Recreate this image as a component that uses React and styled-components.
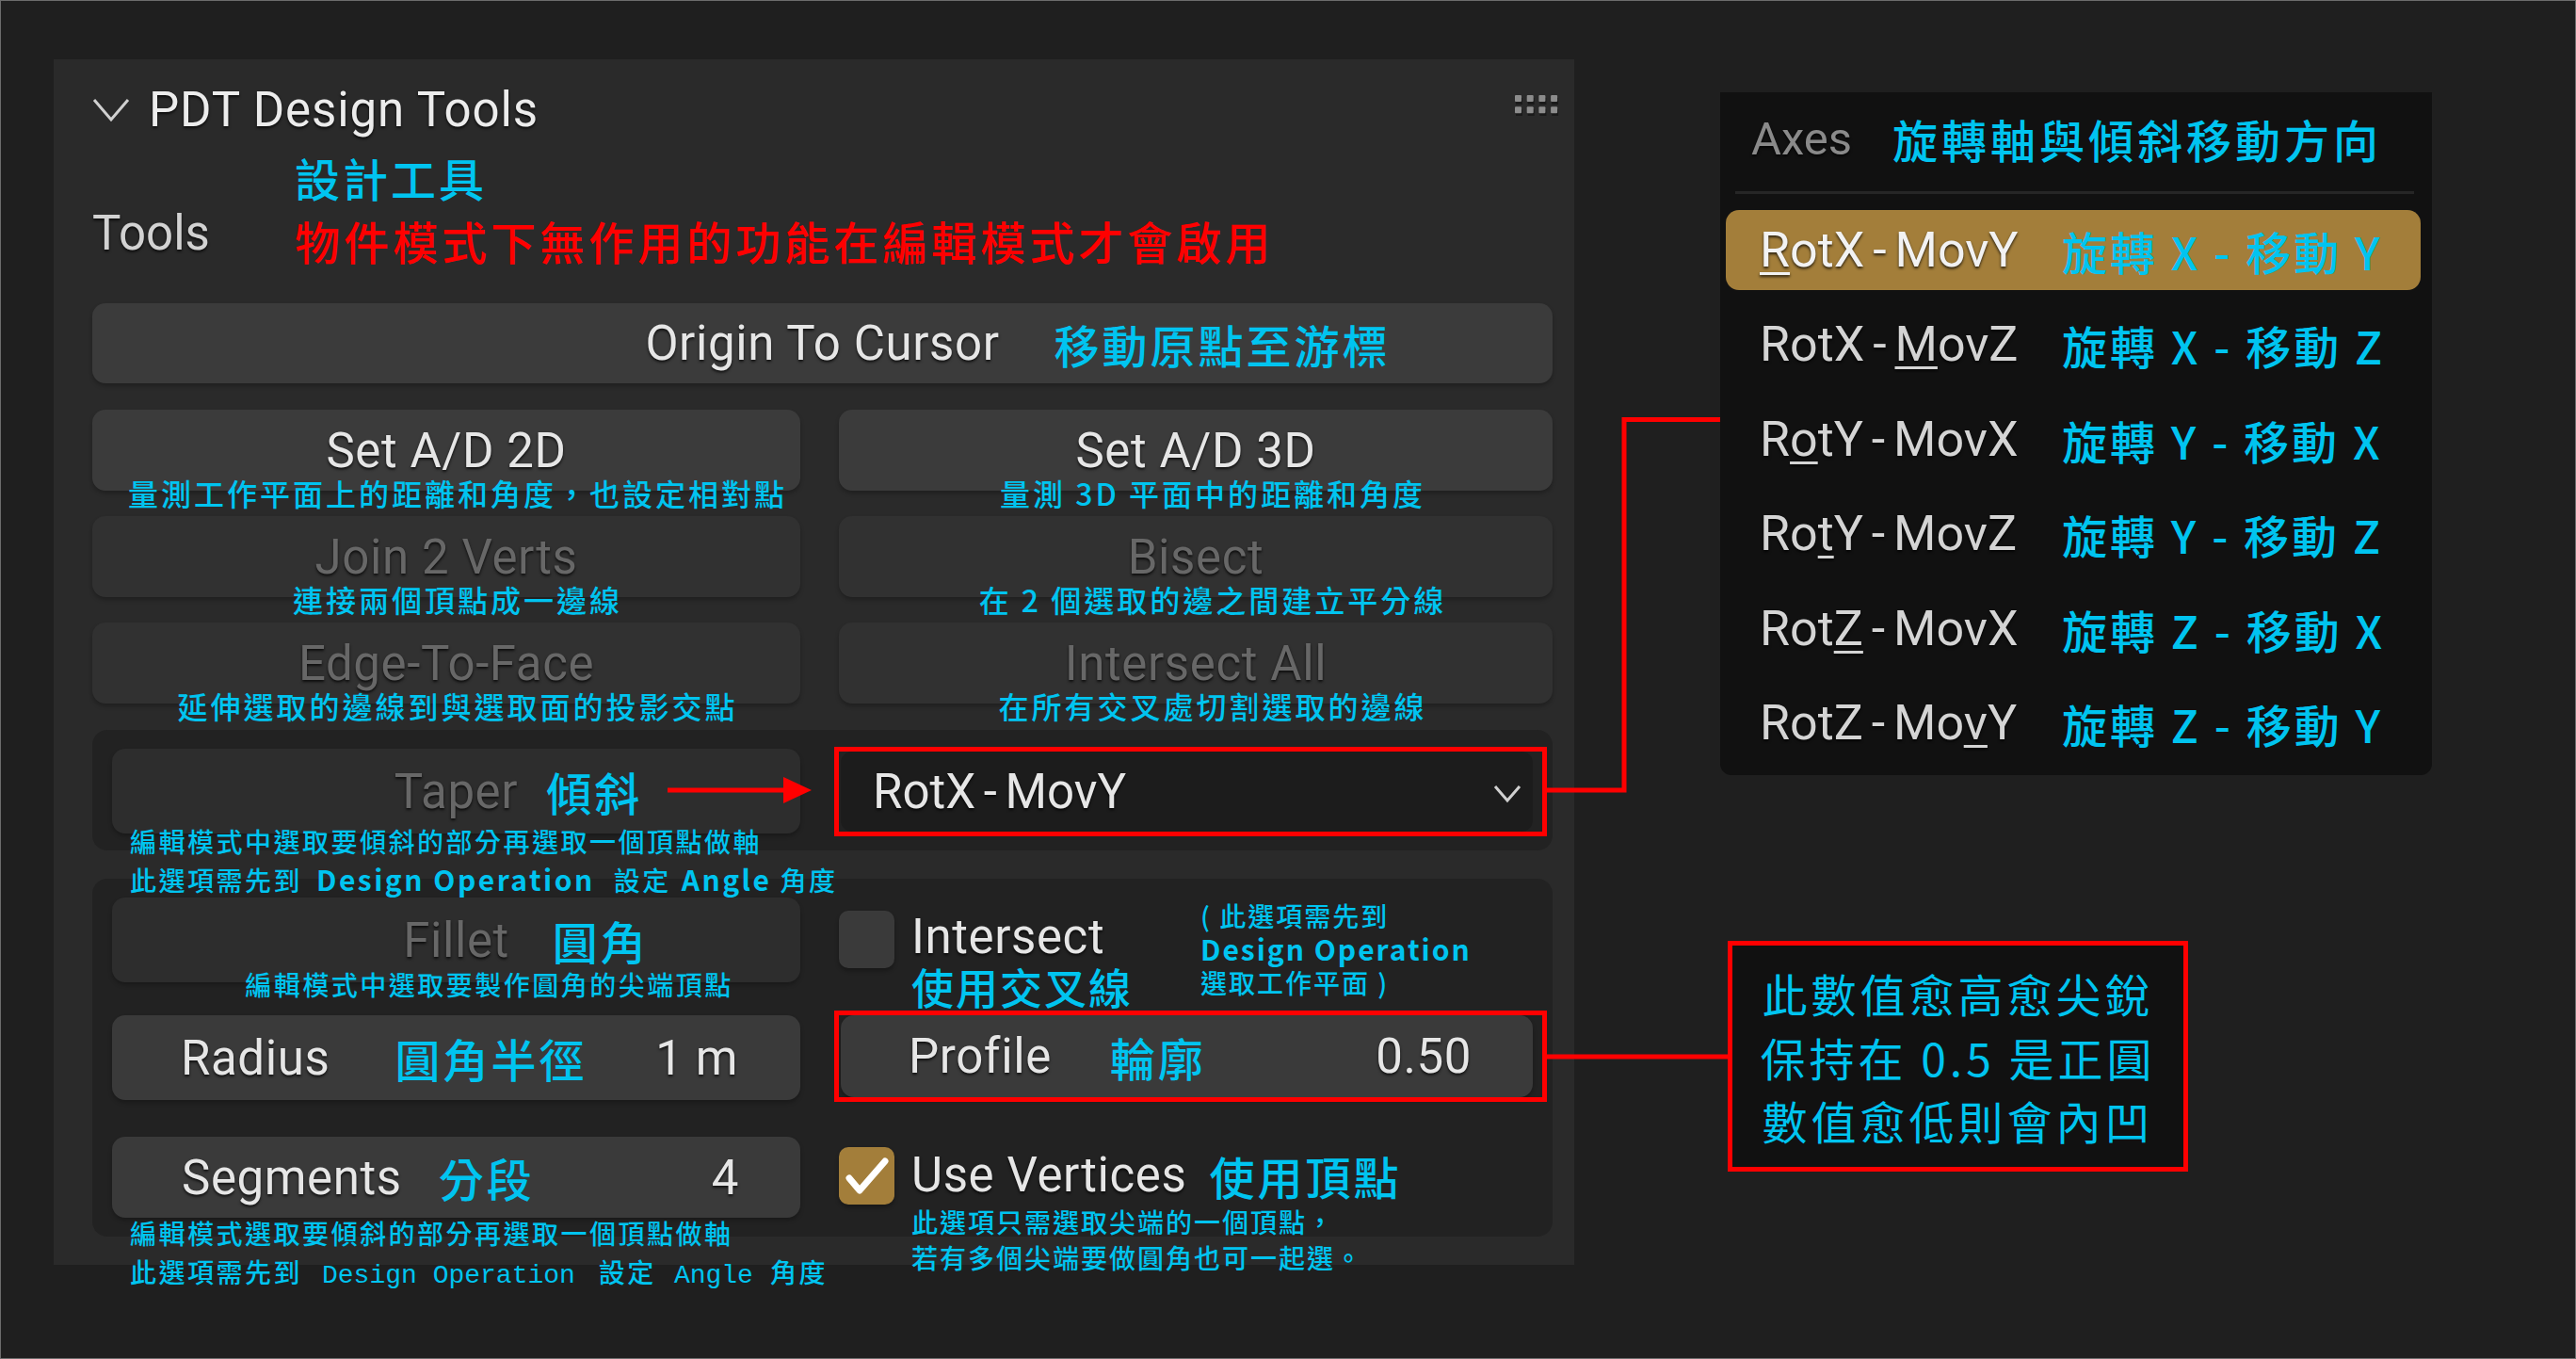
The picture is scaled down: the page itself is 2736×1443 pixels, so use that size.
import React from "react";
import styled, { createGlobalStyle, css } from "styled-components";

const UI = `Roboto, "Liberation Sans", "Noto Sans CJK TC", sans-serif`;
const CJK = `"Noto Sans CJK TC", "Noto Sans CJK SC", sans-serif`;
const MONO = `"Liberation Mono", "Noto Sans CJK TC", monospace`;
const CYAN = "#00c4f0";
const RED = "#ff0000";
const GOLD = "#a37e3a";

const GlobalStyle = createGlobalStyle`
  html, body { margin: 0; padding: 0; background: #1f1f1f; }
  body { font-family: ${UI}; }
  * { box-sizing: border-box; }
`;

const axes = [
  { pre: "", key: "R", post: "otX - MovY", cn: "旋轉 X - 移動 Y", active: true },
  { pre: "RotX - ", key: "M", post: "ovZ", cn: "旋轉 X - 移動 Z" },
  { pre: "R", key: "o", post: "tY - MovX", cn: "旋轉 Y - 移動 X" },
  { pre: "Ro", key: "t", post: "Y - MovZ", cn: "旋轉 Y - 移動 Z" },
  { pre: "Rot", key: "Z", post: " - MovX", cn: "旋轉 Z - 移動 X" },
  { pre: "RotZ - Mo", key: "v", post: "Y", cn: "旋轉 Z - 移動 Y" },
];

const Chevron = ({ w, h, stroke = 3 }) => (
  <svg width={w} height={h} viewBox={`0 0 ${w} ${h}`}>
    <polyline
      points={`2,2 ${w / 2},${h - 3} ${w - 2},2`}
      fill="none"
      stroke="#d0d0d0"
      strokeWidth={stroke}
    />
  </svg>
);

const GripIcon = () => (
  <Grip width="48" height="22" viewBox="0 0 48 22">
    {[0, 1].map((r) =>
      [0, 1, 2, 3].map((c) => (
        <g key={`${r}-${c}`}>
          <rect x={c * 12.7 + 1} y={r * 12.3 + 3} width="7" height="7" fill="#111" opacity="0.6" />
          <rect x={c * 12.7} y={r * 12.3} width="7" height="7" rx="1" fill="#8c8c8c" />
        </g>
      ))
    )}
  </Grip>
);

const CheckIcon = () => (
  <svg width="59" height="61" viewBox="0 0 59 61">
    <polyline
      points="11,33 22,46 49,15"
      fill="none"
      stroke="#ffffff"
      strokeWidth="7"
      strokeLinejoin="round"
      strokeLinecap="round"
    />
  </svg>
);

const App = () => {
  return (
    <>
      <GlobalStyle />
      <Page>
        <Panel>
          <Header>
            <Chevron w={40} h={26} />
            <Title>PDT Design Tools</Title>
            <GripIcon />
          </Header>

          <ToolsBlock>
            <Heading>設計工具</Heading>
            <ToolsLabel>Tools</ToolsLabel>
            <Heading $color={RED} $ls={4}>
              物件模式下無作用的功能在編輯模式才會啟用
            </Heading>
          </ToolsBlock>

          <Button $h={85} $mt={37}>
            <Label>
              Origin To Cursor
              <FloatNote $gap={58}>移動原點至游標</FloatNote>
            </Label>
          </Button>

          <OpsGrid>
            <Cell>
              <Button>Set A/D 2D</Button>
              <Caption $shift={12}>量測工作平面上的距離和角度，也設定相對點</Caption>
            </Cell>
            <Cell>
              <Button>Set A/D 3D</Button>
              <Caption $shift={18}>量測 3D 平面中的距離和角度</Caption>
            </Cell>
            <Cell>
              <Button $off>Join 2 Verts</Button>
              <Caption $shift={12}>連接兩個頂點成一邊線</Caption>
            </Cell>
            <Cell>
              <Button $off>Bisect</Button>
              <Caption $shift={18}>在 2 個選取的邊之間建立平分線</Caption>
            </Cell>
            <Cell>
              <Button $off>Edge-To-Face</Button>
              <Caption $shift={12}>延伸選取的邊線到與選取面的投影交點</Caption>
            </Cell>
            <Cell>
              <Button $off>Intersect All</Button>
              <Caption $shift={18}>在所有交叉處切割選取的邊線</Caption>
            </Cell>
          </OpsGrid>

          <Box $mt={28} $h={128} $rows="90px">
            <Cell>
              <Button $h={90} $off $inset>
                <Label>
                  Taper
                  <FloatNote $gap={30}>傾斜</FloatNote>
                </Label>
              </Button>
              <Notes $mt={-12} $lh={40}>
                編輯模式中選取要傾斜的部分再選取一個頂點做軸
                <br />
                此選項需先到<Em $l={15} $r={20}>Design Operation</Em>設定<Em $l={11} $r={9}>Angle</Em>角度
              </Notes>
            </Cell>
            <Dropdown>
              <span>RotX - MovY</span>
              <DropChevron>
                <Chevron w={30} h={20} />
              </DropChevron>
            </Dropdown>
          </Box>

          <Box $mt={30} $h={380} $rows="90px 90px 90px">
            <Cell>
              <Button $h={90} $off $inset>
                <Label>
                  Fillet
                  <FloatNote $gap={46}>圓角</FloatNote>
                </Label>
              </Button>
              <Caption $shift={35} $small>
                編輯模式中選取要製作圓角的尖端頂點
              </Caption>
            </Cell>

            <OptionCell>
              <Checkbox $mt={14} />
              <OptionText>
                <OptionLabel>Intersect</OptionLabel>
                <Annotation $size={45} $ls={2}>
                  使用交叉線
                </Annotation>
              </OptionText>
              <SideNote>
                ( 此選項需先到
                <br />
                <Em>Design Operation</Em>
                <br />
                選取工作平面 )
              </SideNote>
            </OptionCell>

            <Field $h={90} $pl={73} $pr={66}>
              <span>Radius</span>
              <Annotation $gap={69}>圓角半徑</Annotation>
              <Value>1 m</Value>
            </Field>

            <Field $h={87} $pl={72} $pr={65} $marked>
              <span>Profile</span>
              <Annotation $gap={62}>輪廓</Annotation>
              <Value>0.50</Value>
            </Field>

            <Cell>
              <Field $h={86} $mt={4} $pl={74} $pr={65}>
                <span>Segments</span>
                <Annotation $gap={39}>分段</Annotation>
                <Value>4</Value>
              </Field>
              <Notes $mt={-4} $lh={41}>
                編輯模式選取要傾斜的部分再選取一個頂點做軸
                <br />
                此選項需先到<Mono $l={21} $r={25}>Design Operation</Mono>設定<Mono $l={19} $r={18}>Angle</Mono>角度
              </Notes>
            </Cell>

            <OptionCell>
              <Checkbox $mt={15} $on>
                <CheckIcon />
              </Checkbox>
              <OptionStack>
                <OptionRow>
                  <OptionLabel>Use Vertices</OptionLabel>
                  <Annotation $gap={24}>使用頂點</Annotation>
                </OptionRow>
                <Notes $mt={0} $ml={0} $lh={38} $ls={2}>
                  此選項只需選取尖端的一個頂點，
                  <br />
                  若有多個尖端要做圓角也可一起選。
                </Notes>
              </OptionStack>
            </OptionCell>
          </Box>
        </Panel>

        <RightColumn>
          <Popup>
            <PopupHeader>
              <AxesLabel>Axes</AxesLabel>
              <Annotation $gap={43} $ls={4}>
                旋轉軸與傾斜移動方向
              </Annotation>
            </PopupHeader>
            <Separator />
            <Menu>
              {axes.map((a) => (
                <MenuItem key={a.cn} $active={a.active}>
                  <ItemLabel $active={a.active}>
                    {a.pre}
                    <Key>{a.key}</Key>
                    {a.post}
                  </ItemLabel>
                  <Annotation $ls={3}>{a.cn}</Annotation>
                </MenuItem>
              ))}
            </Menu>
          </Popup>

          <NoteBox>
            此數值愈高愈尖銳
            <br />
            保持在 0.5 是正圓
            <br />
            數值愈低則會內凹
          </NoteBox>
        </RightColumn>

        <Overlay width="2736" height="1443" viewBox="0 0 2736 1443">
          <g stroke={RED} strokeWidth="5" fill="none">
            <path d="M1643 839 H1725 V445.5 H1827" />
            <path d="M1643 1122 H1835" />
            <path d="M709 839 H838" />
          </g>
          <polygon points="832,825 862,839 832,853" fill={RED} />
        </Overlay>
      </Page>
    </>
  );
};

const shadow = "0 2px 3px rgba(0, 0, 0, 0.75)";

const Page = styled.main`
  position: relative;
  width: 2736px;
  height: 1443px;
  display: flex;
  align-items: flex-start;
  padding: 63px 0 0 57px;
  background: #1f1f1f;
  box-shadow: inset 0 0 0 1px #6c6c6c;
  overflow: hidden;
`;

const Panel = styled.section`
  width: 1615px;
  height: 1280px;
  flex-shrink: 0;
  background: #2a2a2a;
  padding: 26px 23px 30px 41px;
  display: flex;
  flex-direction: column;
`;

const Header = styled.header`
  display: flex;
  align-items: center;
  height: 56px;
`;

const Title = styled.h1`
  margin: 0 0 0 20px;
  font: 400 51px/56px ${UI};
  letter-spacing: 0.9px;
  color: #ececec;
  text-shadow: ${shadow};
`;

const Grip = styled.svg`
  margin: -11px -8px 0 auto;
`;

const ToolsBlock = styled.div`
  display: grid;
  grid-template-columns: 215px auto;
  grid-template-rows: 60px 60px;
  row-gap: 7px;
  margin-top: 13px;
`;

const ToolsLabel = styled.div`
  grid-column: 1;
  grid-row: 2;
  margin-top: -7px;
  font: 400 51px/60px ${UI};
  color: #d2d2d2;
  text-shadow: ${shadow};
`;

const Heading = styled.div`
  grid-column: 2;
  font: 500 48px/60px ${CJK};
  letter-spacing: ${(p) => p.$ls ?? 3}px;
  color: ${(p) => p.$color || CYAN};
  white-space: nowrap;
`;

const Button = styled.div`
  height: ${(p) => p.$h || 86}px;
  margin-top: ${(p) => p.$mt || 0}px;
  display: flex;
  align-items: center;
  justify-content: center;
  border-radius: 14px;
  background: ${(p) => (p.$off ? (p.$inset ? "#2d2d2d" : "#313131") : "#3b3b3b")};
  color: ${(p) => (p.$off ? "#676767" : "#e6e6e6")};
  font: 400 51px/1 ${UI};
  letter-spacing: 0.6px;
  text-shadow: ${shadow};
  box-shadow: 0 3px 4px rgba(0, 0, 0, 0.25);
  white-space: nowrap;
`;

const Label = styled.span`
  position: relative;
`;

const Annotation = styled.span`
  margin-left: ${(p) => p.$gap || 0}px;
  font: 500 ${(p) => p.$size || 48}px/1 ${CJK};
  letter-spacing: ${(p) => p.$ls ?? 3}px;
  color: ${CYAN};
  text-shadow: none;
  white-space: nowrap;
`;

const FloatNote = styled(Annotation)`
  position: absolute;
  left: 100%;
  top: 50%;
  transform: translateY(-50%);
`;

const OpsGrid = styled.div`
  display: grid;
  grid-template-columns: 752px 758px;
  column-gap: 41px;
  row-gap: 27px;
  margin-top: 28px;
`;

const Cell = styled.div`
  display: flex;
  flex-direction: column;
  min-width: 0;
`;

const Caption = styled.div`
  position: relative;
  z-index: 2;
  margin: -16px 0 -20px;
  padding-left: ${(p) => (p.$shift || 0) * 2}px;
  text-align: center;
  font: 500 ${(p) => (p.$small ? 28 : 32)}px/36px ${CJK};
  letter-spacing: ${(p) => (p.$small ? 2.5 : 3)}px;
  color: ${CYAN};
  white-space: nowrap;
`;

const Box = styled.div`
  position: relative;
  height: ${(p) => p.$h}px;
  margin-top: ${(p) => p.$mt}px;
  padding: 20px 20px 0 21px;
  display: grid;
  grid-template-columns: 731px 735px;
  grid-template-rows: ${(p) => p.$rows};
  column-gap: 43px;
  row-gap: 35px;
  align-items: start;
  background: #222222;
  border-radius: 16px;
`;

const Notes = styled.div`
  position: relative;
  z-index: 2;
  margin: ${(p) => p.$mt}px 0 0 ${(p) => p.$ml ?? 19}px;
  font: 500 28px/${(p) => p.$lh}px ${CJK};
  letter-spacing: ${(p) => p.$ls ?? 2.5}px;
  color: ${CYAN};
  white-space: nowrap;
`;

const Em = styled.span`
  margin: 0 ${(p) => p.$r || 0}px 0 ${(p) => p.$l || 0}px;
  font-size: 30px;
  font-weight: 700;
`;

const Mono = styled.span`
  margin: 0 ${(p) => p.$r || 0}px 0 ${(p) => p.$l || 0}px;
  font: 400 28px ${MONO};
  letter-spacing: 0;
`;

const redFrame = css`
  &::after {
    content: "";
    position: absolute;
    inset: -5px -15px -5px -7px;
    border: 5px solid ${RED};
    pointer-events: none;
  }
`;

const Dropdown = styled.div`
  position: relative;
  align-self: center;
  height: 85px;
  display: flex;
  align-items: center;
  padding: 0 12px 0 34px;
  border-radius: 12px;
  background: #1c1c1c;
  color: #e6e6e6;
  font: 400 51px/1 ${UI};
  word-spacing: -4px;
  text-shadow: ${shadow};
  ${redFrame}
`;

const DropChevron = styled.span`
  display: flex;
  margin: 6px 0 0 auto;
`;

const Field = styled.div`
  position: relative;
  height: ${(p) => p.$h}px;
  margin-top: ${(p) => p.$mt || 0}px;
  display: flex;
  align-items: center;
  padding: 0 ${(p) => p.$pr}px 0 ${(p) => p.$pl}px;
  border-radius: 14px;
  background: #3a3a3a;
  color: #e6e6e6;
  font: 400 51px/1 ${UI};
  letter-spacing: 0.6px;
  text-shadow: ${shadow};
  box-shadow: 0 3px 4px rgba(0, 0, 0, 0.25);
  white-space: nowrap;
  ${(p) => p.$marked && redFrame}
`;

const Value = styled.span`
  margin-left: auto;
`;

const OptionCell = styled.div`
  display: flex;
  align-items: flex-start;
  margin-left: -2px;
`;

const Checkbox = styled.div`
  width: 59px;
  height: 61px;
  flex-shrink: 0;
  margin-top: ${(p) => p.$mt}px;
  display: flex;
  align-items: center;
  justify-content: center;
  border-radius: 10px;
  background: ${(p) => (p.$on ? GOLD : "#3a3a3a")};
  box-shadow: 0 3px 4px rgba(0, 0, 0, 0.3);
`;

const OptionText = styled.div`
  width: 307px;
  margin: 22px 0 0 18px;
  display: flex;
  flex-direction: column;
  gap: 10px;
`;

const OptionLabel = styled.span`
  font: 400 51px/40px ${UI};
  letter-spacing: 0.6px;
  color: #e6e6e6;
  text-shadow: ${shadow};
  white-space: nowrap;
`;

const SideNote = styled.div`
  margin-top: 2px;
  font: 500 28px/35px ${CJK};
  letter-spacing: 2px;
  color: ${CYAN};
  white-space: nowrap;
`;

const OptionStack = styled.div`
  margin: 15px 0 0 18px;
  display: flex;
  flex-direction: column;
`;

const OptionRow = styled.div`
  height: 60px;
  display: flex;
  align-items: center;
`;

const RightColumn = styled.div`
  margin-left: 155px;
  display: flex;
  flex-direction: column;
  align-items: flex-start;
`;

const Popup = styled.div`
  width: 756px;
  height: 725px;
  margin-top: 35px;
  padding: 19px 12px 12px 6px;
  display: flex;
  flex-direction: column;
  background: #111111;
  border-radius: 0 0 12px 12px;
`;

const PopupHeader = styled.div`
  height: 60px;
  display: flex;
  align-items: center;
  padding-left: 27px;
`;

const AxesLabel = styled.span`
  font: 400 49px/1 ${UI};
  color: #8a8a8a;
  text-shadow: ${shadow};
`;

const Separator = styled.div`
  height: 3px;
  margin: 26px 7px 17px 10px;
  background: #262626;
`;

const Menu = styled.div`
  display: flex;
  flex-direction: column;
  gap: 15.5px;
`;

const MenuItem = styled.div`
  height: 85px;
  display: flex;
  align-items: center;
  padding-left: 36px;
  border-radius: 14px;
  background: ${(p) => (p.$active ? GOLD : "transparent")};
`;

const ItemLabel = styled.span`
  width: 321px;
  flex-shrink: 0;
  font: 400 52px/1 ${UI};
  word-spacing: -4px;
  color: ${(p) => (p.$active ? "#f2f2f2" : "#d4d4d4")};
  text-shadow: ${shadow};
  white-space: pre;
`;

const Key = styled.span`
  text-decoration: underline;
  text-decoration-thickness: 3px;
  text-underline-offset: 6px;
`;

const NoteBox = styled.div`
  width: 489px;
  height: 245px;
  margin: 176px 0 0 8px;
  padding: 17px 0;
  border: 5px solid ${RED};
  background: #111111;
  text-align: center;
  font: 400 48px/67.5px ${CJK};
  letter-spacing: 4px;
  color: ${CYAN};
  white-space: nowrap;
`;

const Overlay = styled.svg`
  position: absolute;
  left: 0;
  top: 0;
  z-index: 5;
  pointer-events: none;
`;

export default App;
